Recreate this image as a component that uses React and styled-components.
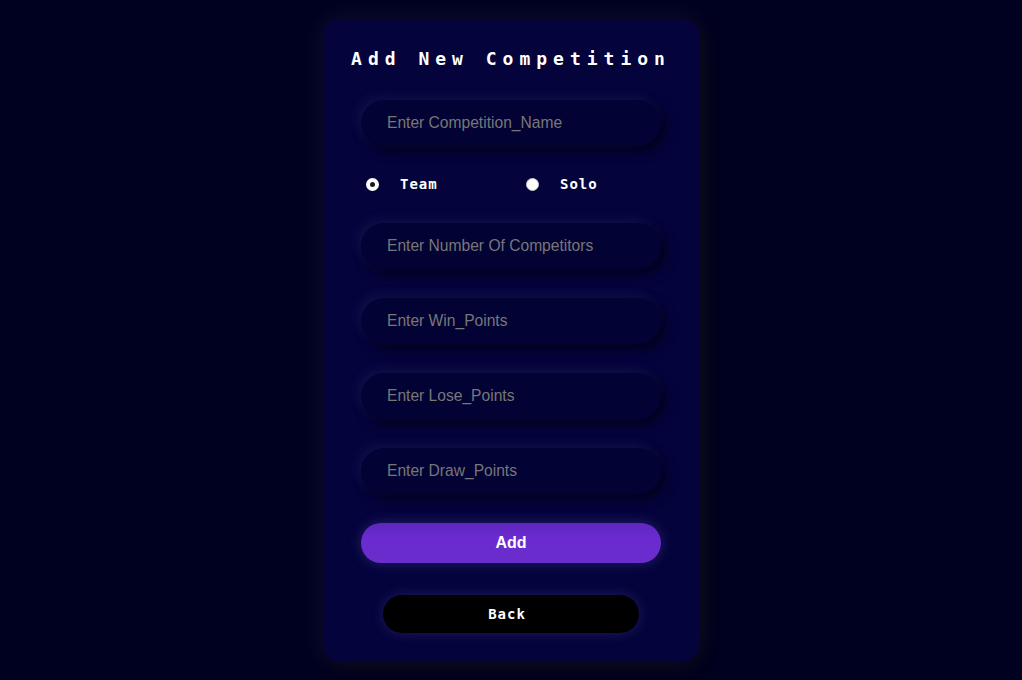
import React, { useState } from "react";
import styled, { createGlobalStyle } from "styled-components";

const GlobalStyle = createGlobalStyle`
  html, body {
    margin: 0;
    padding: 0;
    background: #000020;
    font-family: "Liberation Sans", Arial, sans-serif;
  }
`;

const Page = styled.div`
  min-height: 680px;
  display: flex;
  justify-content: center;
  align-items: flex-start;
  padding-top: 19px;
  box-sizing: border-box;
`;

const Card = styled.form`
  width: 377px;
  box-sizing: border-box;
  padding: 28px 38px 29px 38px;
  background: #04033c;
  border-radius: 18px;
  box-shadow: 0 0 22px rgba(150, 150, 220, 0.12), 6px 6px 18px rgba(0, 0, 0, 0.6);
  display: flex;
  flex-direction: column;
  align-items: center;
`;

const Title = styled.h2`
  margin: 0 0 29px 0;
  font-family: "DejaVu Sans Mono", monospace;
  font-size: 18px;
  line-height: 24px;
  font-weight: bold;
  letter-spacing: 6px;
  color: #ffffff;
  text-align: center;
  white-space: nowrap;
`;

const Field = styled.input`
  width: 300px;
  height: 46px;
  box-sizing: border-box;
  border: none;
  outline: none;
  border-radius: 23px;
  padding: 0 26px;
  margin-bottom: ${(p) => p.$mb || 29}px;
  background: #030234;
  color: #ddd;
  font-family: "Liberation Sans", Arial, sans-serif;
  font-size: 15.6px;
  box-shadow: -4px -4px 12px rgba(140, 140, 220, 0.1), 5px 5px 12px rgba(0, 0, 0, 0.55);
  &::placeholder {
    color: #777777;
  }
`;

const RadioRow = styled.div`
  width: 300px;
  height: 20px;
  display: flex;
  align-items: center;
  margin-bottom: 29px;
`;

const Option = styled.label`
  flex: 0 0 ${(p) => p.$w || 140}px;
  display: flex;
  align-items: center;
  cursor: pointer;
`;

const Radio = styled.input`
  appearance: none;
  -webkit-appearance: none;
  width: 13px;
  height: 13px;
  margin: 0 0 0 5px;
  border-radius: 50%;
  background: #ffffff;
  border: 1px solid #c8c8d0;
  box-sizing: border-box;
  &:checked {
    background: #1a1a2a;
    border: 4px solid #ffffff;
  }
`;

const OptionText = styled.span`
  margin-left: 21px;
  font-family: "DejaVu Sans Mono", monospace;
  font-size: 14px;
  font-weight: bold;
  letter-spacing: 1px;
  color: #ffffff;
`;

const AddButton = styled.button`
  width: 300px;
  height: 40px;
  border: none;
  border-radius: 20px;
  background: linear-gradient(180deg, #5f27bd 0%, #6a2ad0 35%, #6b2dcc 100%);
  color: #ffffff;
  font-family: "Liberation Sans", Arial, sans-serif;
  font-weight: bold;
  font-size: 16px;
  box-shadow: 0 0 14px rgba(140, 120, 230, 0.25);
  cursor: pointer;
`;

const BackButton = styled.button`
  width: 256px;
  height: 38px;
  margin-top: 32px;
  padding: 0 8px 0 0;
  border: none;
  border-radius: 19px;
  background: #000000;
  color: #ffffff;
  font-family: "DejaVu Sans Mono", monospace;
  font-weight: bold;
  font-size: 14px;
  letter-spacing: 1px;
  box-shadow: 0 0 14px rgba(140, 140, 230, 0.2);
  cursor: pointer;
`;

export default function App() {
  const [kind, setKind] = useState("team");
  return (
    <>
      <GlobalStyle />
      <Page>
        <Card onSubmit={(e) => e.preventDefault()}>
          <Title>Add New Competition</Title>
          <Field placeholder="Enter Competition_Name" $mb={28} />
          <RadioRow>
            <Option $w={160}>
              <Radio
                type="radio"
                name="kind"
                checked={kind === "team"}
                onChange={() => setKind("team")}
              />
              <OptionText>Team</OptionText>
            </Option>
            <Option $w={140}>
              <Radio
                type="radio"
                name="kind"
                checked={kind === "solo"}
                onChange={() => setKind("solo")}
              />
              <OptionText>Solo</OptionText>
            </Option>
          </RadioRow>
          <Field placeholder="Enter Number Of Competitors" />
          <Field placeholder="Enter Win_Points" />
          <Field placeholder="Enter Lose_Points" />
          <Field placeholder="Enter Draw_Points" />
          <AddButton type="submit">Add</AddButton>
          <BackButton type="button">Back</BackButton>
        </Card>
      </Page>
    </>
  );
}
